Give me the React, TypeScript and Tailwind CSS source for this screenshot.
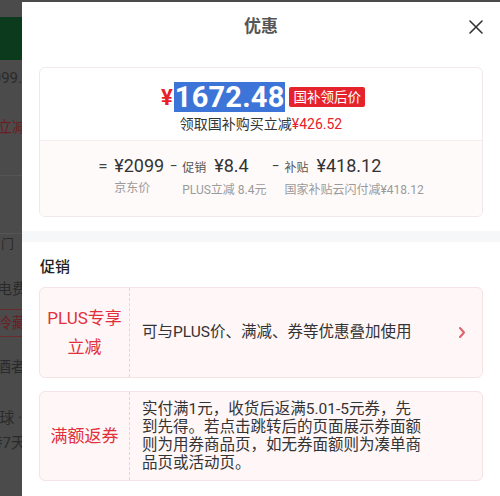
import React from 'react'

const FONT = 'font-[Roboto,"Noto_Sans_CJK_SC",sans-serif]'

function Backdrop() {
  return (
    <div className="w-[22px] shrink-0 flex flex-col overflow-hidden text-[15px] text-[#2a2a2a] leading-[20px]">
      <div className="h-[17px]" />
      <div className="h-[43px] bg-[#0c3a1c]" />
      <div className="h-[8px]" />
      <div className="h-[20px] flex justify-end whitespace-nowrap">¥2099.</div>
      <div className="h-[29px]" />
      <div className="h-[20px] flex justify-end whitespace-nowrap text-[#6b1e22] mr-[-5px]">国补立减</div>
      <div className="h-[38px]" />
      <div className="h-[58px] border-t border-[#555]" />
      <div className="h-[20px] border-t border-[#555] pl-[1px] text-[13px]">门</div>
      <div className="h-[26px]" />
      <div className="h-[20px] flex justify-end whitespace-nowrap mr-[-5px]">节省电费</div>
      <div className="h-[10px]" />
      <div className="h-[28px] border-y border-[#6b2a2e] flex items-center justify-end whitespace-nowrap text-[#6b1e22] mr-[-5px]">保额冷藏</div>
      <div className="h-[20px]" />
      <div className="h-[20px] flex justify-end whitespace-nowrap mr-[-4px]">饮酒者</div>
      <div className="h-[31px]" />
      <div className="h-[20px] flex justify-end whitespace-nowrap">全球 ·</div>
      <div className="h-[5px]" />
      <div className="h-[20px] flex justify-end whitespace-nowrap mr-[-4px]">支持7天</div>
    </div>
  )
}

function PriceCol({ op, opClass, children, label }: { op: string; opClass: string; children: React.ReactNode; label: string }) {
  return (
    <div className="flex items-start">
      <span className={`text-[#444] shrink-0 ${opClass}`}>{op}</span>
      <div className="flex flex-col">
        <div className="flex items-baseline text-[18px] leading-[22px] text-[#333] whitespace-nowrap">{children}</div>
        <div className="mt-[3px] text-[12px] leading-[16px] text-[#9a9a9a] whitespace-nowrap">{label}</div>
      </div>
    </div>
  )
}

function PromoCard({ title, children, arrow, className }: { title: React.ReactNode; children: React.ReactNode; arrow?: boolean; className?: string }) {
  return (
    <div className={`mx-[17px] flex rounded-md border border-[#f4e4e6] bg-[#fff6f7] ${className ?? ''}`}>
      <div className="w-[90px] shrink-0 border-r border-dashed border-[#e9d3d6] flex flex-col items-center justify-center text-[17px] leading-[29px] text-[#e0303c] text-center">
        {title}
      </div>
      <div className="flex-1 flex items-center justify-between pl-[12px] pr-[16px]">
        {children}
        {arrow && (
          <svg width="8" height="13" viewBox="0 0 8 13" fill="none">
            <path d="M2 2l4 4.5L2 11" stroke="#e0606a" strokeWidth="2" strokeLinecap="round" strokeLinejoin="round" />
          </svg>
        )}
      </div>
    </div>
  )
}

export default function App() {
  return (
    <div className={`flex h-[496px] w-[500px] overflow-hidden bg-[#4b4b4b] ${FONT}`}>
      <Backdrop />
      <div className="mt-[2px] flex-1 flex flex-col bg-white">
        <header className="relative h-[50px] flex items-center justify-center">
          <h1 className="text-[17px] font-bold text-[#555]">优惠</h1>
          <button className="absolute right-[17px] top-[18px]">
            <svg width="14" height="14" viewBox="0 0 14 14" fill="none">
              <path d="M1 1l12 12M13 1L1 13" stroke="#333" strokeWidth="1.6" strokeLinecap="round" />
            </svg>
          </button>
        </header>

        <div className="mt-[15px] mx-[17px] rounded-md border border-[#f1e8e9] overflow-hidden">
          <div className="h-[72px] flex flex-col items-center pt-[14px]">
            <div className="flex items-center h-[30px] pl-[4px]">
              <span className="text-[22px] font-bold text-[#e8202a] mr-[1px]">¥</span>
              <span className="bg-[#3d74d8] text-white text-[29px] font-bold leading-[30px] px-[1px] tracking-[0.2px]">1672.48</span>
              <span className="ml-[4px] bg-[#e5232c] text-white text-[13.5px] leading-[20px] px-[4px] rounded-[2px]">国补领后价</span>
            </div>
            <div className="mt-[3px] text-[14px] leading-[18px] text-[#333]">
              领取国补购买立减<span className="text-[#e8202a]">¥426.52</span>
            </div>
          </div>
          <div className="h-[76px] border-t border-[#f7eced] bg-[#fffafa] flex justify-center gap-[6px] pt-[14px]">
            <PriceCol op="=" opClass="w-[16px] text-[17px] leading-[22px]" label="京东价">¥2099</PriceCol>
            <PriceCol op="–" opClass="w-[12px] text-[15px] leading-[22px] scale-x-75 origin-left" label="PLUS立减 8.4元">
              <span className="text-[12px] text-[#555] mr-[8px]">促销</span>¥8.4
            </PriceCol>
            <PriceCol op="–" opClass="w-[12px] text-[15px] leading-[22px] scale-x-75 origin-left" label="国家补贴云闪付减¥418.12">
              <span className="text-[12px] text-[#555] mr-[8px]">补贴</span>¥418.12
            </PriceCol>
          </div>
        </div>

        <div className="mt-[14px] h-[11px] bg-[#f6f7f9]" />

        <h2 className="px-[18px] pt-[14px] text-[15px] leading-[22px] font-medium text-[#222]">促销</h2>

        <PromoCard
          className="mt-[9px] h-[91px]"
          arrow
          title={<><span>PLUS专享</span><span>立减</span></>}
        >
          <span className="text-[15.5px] text-[#333] whitespace-nowrap">可与PLUS价、满减、券等优惠叠加使用</span>
        </PromoCard>

        <PromoCard className="mt-[13px] h-[90px]" title="满额返券">
          <p className="w-[282px] text-[15.5px] leading-[18px] text-[#333]">
            实付满1元，收货后返满5.01-5元券，先到先得。若点击跳转后的页面展示券面额则为用券商品页，如无券面额则为凑单商品页或活动页。
          </p>
        </PromoCard>
      </div>
    </div>
  )
}
